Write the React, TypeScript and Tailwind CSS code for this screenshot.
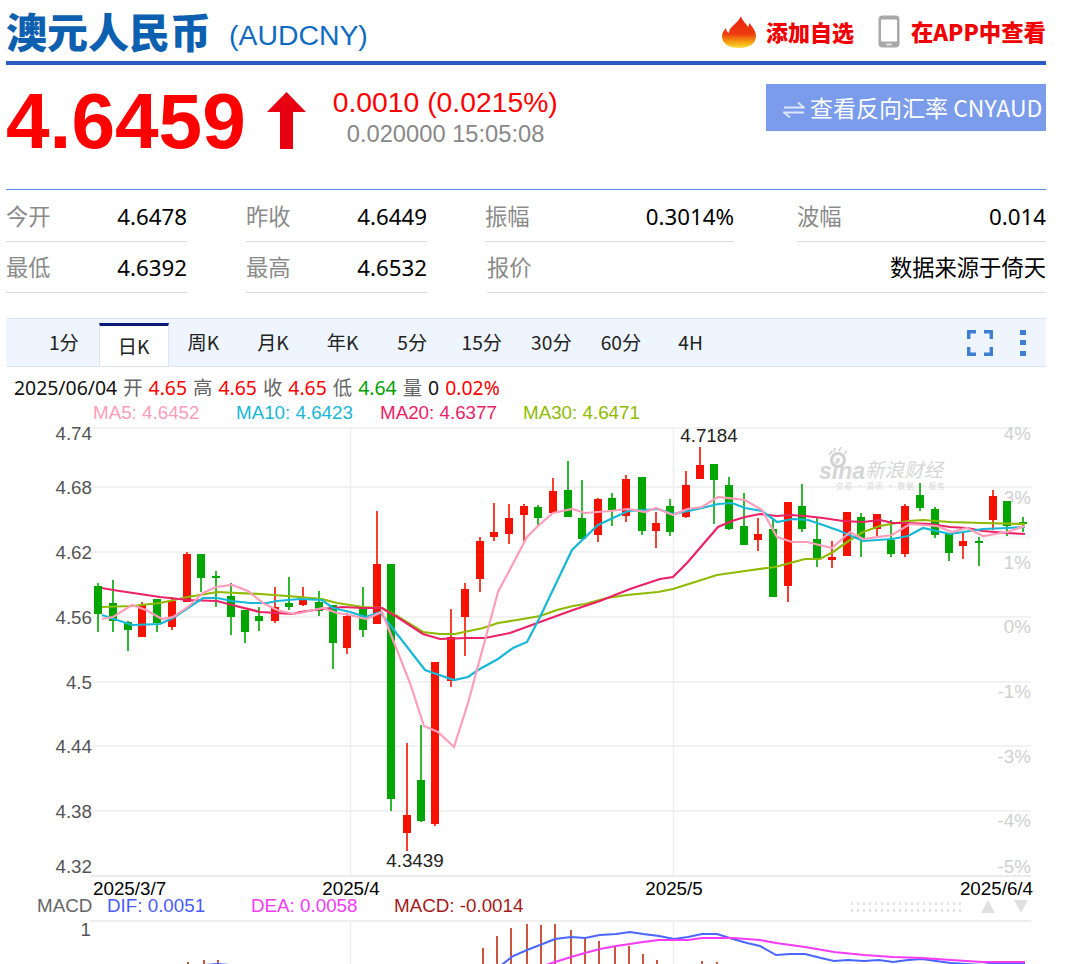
const GREEN = "#00a600"
const RED = "#f51200"

// x, body top, body bottom, wick top, wick bottom, colour
const candles: [number, number, number, number, number, string][] = [
  [98, 586, 614, 583, 632, GREEN], [113, 603, 621, 580, 632, GREEN], [128, 622, 630, 621, 651, GREEN],
  [142, 605, 637, 602, 637, RED], [157, 599, 623, 599, 632, GREEN], [172, 601, 627, 597, 630, RED],
  [187, 554, 602, 552, 602, RED], [201, 554, 578, 554, 592, GREEN], [216, 576, 578, 571, 607, GREEN],
  [231, 596, 617, 583, 635, GREEN], [245, 610, 632, 610, 643, GREEN], [259, 616, 621, 607, 631, GREEN],
  [275, 607, 621, 587, 623, RED], [289, 603, 607, 577, 610, GREEN], [303, 600, 605, 587, 606, RED],
  [319, 602, 611, 591, 616, GREEN], [333, 605, 643, 605, 669, GREEN], [347, 616, 648, 613, 654, RED],
  [363, 608, 630, 587, 637, GREEN], [377, 564, 624, 511, 624, RED], [391, 564, 799, 564, 811, GREEN],
  [407, 815, 833, 743, 851, RED], [421, 780, 821, 725, 822, GREEN], [435, 662, 824, 662, 826, RED],
  [451, 637, 681, 609, 687, RED], [465, 589, 617, 583, 656, RED], [480, 541, 579, 537, 592, RED],
  [494, 532, 537, 503, 541, RED], [509, 518, 534, 504, 544, RED], [524, 506, 515, 504, 541, RED],
  [538, 507, 518, 505, 525, GREEN], [553, 491, 513, 478, 513, RED], [568, 490, 517, 461, 517, GREEN],
  [582, 518, 539, 480, 539, GREEN], [598, 499, 535, 498, 542, RED], [612, 498, 510, 493, 526, GREEN],
  [626, 479, 516, 475, 522, RED], [642, 477, 531, 477, 535, GREEN], [656, 523, 531, 512, 548, RED],
  [670, 506, 532, 499, 536, GREEN], [686, 485, 517, 471, 518, RED], [700, 465, 479, 447, 479, RED],
  [714, 464, 480, 464, 524, GREEN], [729, 485, 529, 477, 530, GREEN], [744, 526, 545, 493, 545, GREEN],
  [758, 534, 540, 518, 551, RED], [773, 529, 597, 520, 597, GREEN], [788, 502, 586, 502, 602, RED],
  [802, 506, 529, 484, 532, GREEN], [817, 539, 559, 518, 567, GREEN], [832, 557, 560, 541, 568, RED],
  [847, 512, 556, 512, 556, RED], [861, 517, 538, 513, 557, GREEN], [877, 514, 529, 514, 536, RED],
  [891, 540, 554, 520, 557, GREEN], [905, 506, 554, 504, 557, RED], [920, 495, 508, 483, 511, GREEN],
  [935, 509, 535, 507, 538, GREEN], [949, 533, 553, 533, 561, GREEN], [963, 541, 546, 533, 559, RED],
  [979, 541, 543, 537, 566, GREEN], [993, 496, 520, 490, 530, RED], [1007, 501, 526, 501, 536, GREEN],
  [1023, 522, 524, 517, 532, GREEN],
]

const ma5 = "102,619 113,617 132,605 146,610 162,619 173,617 188,607 203,593 216,587 232,585 248,591 263,603 277,610 293,614 300,613 323,608 337,613 350,615 366,619 382,612 410,683 424,726 438,732 454,747 468,703 498,592 527,537 538,526 553,513 572,509 585,513 610,511 628,509 645,512 656,508 673,515 687,509 702,507 718,497 745,500 762,510 777,537 792,542 807,542 832,548 850,532 863,539 892,535 910,524 937,526 952,532 967,528 983,536 1007,532 1025,526"
const ma10 = "102,615 132,625 160,624 173,618 203,598 217,598 232,601 250,603 267,603 277,601 300,599 322,600 333,608 350,612 366,617 380,612 425,670 454,680 468,677 478,670 498,659 513,648 527,642 540,617 572,550 598,525 628,511 645,510 658,509 673,514 702,508 718,504 732,503 745,508 762,511 777,522 793,519 808,520 823,525 840,531 863,541 892,539 908,536 923,528 950,534 970,531 983,529 1007,528 1025,527"
const ma20 = "102,588 113,590 160,597 188,600 217,601 232,605 260,612 277,613 293,614 300,612 322,609 343,607 363,608 382,608 397,617 423,634 440,639 467,638 485,638 510,633 540,622 573,610 600,601 630,589 645,584 660,579 673,577 687,563 718,527 732,521 745,517 760,514 777,516 790,515 805,516 823,518 843,521 863,522 880,520 893,523 907,523 930,524 950,527 967,528 983,531 1007,533 1025,534"
const ma30 = "102,607 132,606 160,603 188,597 217,592 260,594 300,597 322,599 337,603 363,607 382,608 397,616 423,632 440,634 455,634 483,628 498,623 517,620 540,616 557,610 573,606 585,604 607,598 627,595 658,592 673,589 695,582 717,575 745,571 775,567 790,563 805,559 820,559 833,552 850,540 863,532 880,526 908,521 923,520 950,522 983,523 1025,524"

const dif = "186,966 204,965 218,964 240,966 499,967 513,956 527,950 540,945 555,939 571,937 585,938 600,935 616,934 630,932 643,934 659,936 674,939 688,937 702,934 717,934 733,939 747,943 760,946 776,955 790,954 805,954 821,958 834,961 848,960 864,961 879,960 893,962 908,960 922,959 936,961 951,963 967,964 982,965 996,963 1025,963"
const dea = "540,967 555,962 571,957 585,953 600,949 616,946 630,944 643,942 659,940 674,940 688,940 702,938 717,938 733,938 760,940 776,943 805,947 834,952 864,955 893,957 922,958 951,960 982,962 1025,962"
const macdBars: [number, number][] = [
  [188, 962], [204, 960], [218, 960], [232, 966], [380, 966], [467, 966], [483, 948], [497, 936], [511, 928],
  [527, 924], [541, 925], [555, 924], [571, 930], [585, 938], [599, 941], [615, 946], [629, 946], [643, 954],
  [657, 960], [673, 966], [688, 964], [702, 961], [717, 962],
]

const gridY = [487, 552, 617, 682, 746, 811]
const priceLabels: [string, number][] = [["4.74", 433], ["4.68", 487], ["4.62", 552], ["4.56", 617], ["4.5", 682], ["4.44", 746], ["4.38", 811], ["4.32", 866]]
const pctLabels: [string, number][] = [["4%", 433], ["3%", 497], ["1%", 562], ["0%", 626], ["-1%", 691], ["-3%", 756], ["-4%", 820], ["-5%", 866]]
const tabs = ["1分", "日K", "周K", "月K", "年K", "5分", "15分", "30分", "60分", "4H"]

function Stat({ label, value, width, height }: { label: string; value: string; width: string; height: string }) {
  return (
    <div className={`flex items-center justify-between border-b border-[#dcdcdc] ${height} ${width}`}>
      <span className="text-[#8a8a8a]">{label}</span>
      <span className="text-black">{value}</span>
    </div>
  )
}

function Flame() {
  return (
    <svg width="36" height="34" viewBox="0 0 36 34">
      <defs>
        <linearGradient id="flame" x1="0" y1="0" x2="0" y2="1">
          <stop offset="0" stopColor="#e8200f" />
          <stop offset="0.55" stopColor="#ee3a10" />
          <stop offset="0.8" stopColor="#f59a10" />
          <stop offset="1" stopColor="#f8e23a" />
        </linearGradient>
      </defs>
      <path d="M20 1c1 5 5 7 7 11 1-1 1-3 1-4 4 4 7 9 7 13 0 8-7 12-17 12S1 29 1 21c0-3 2-6 4-8 0 2 1 4 3 5 0-7 9-9 12-17z" fill="url(#flame)" />
    </svg>
  )
}

function Phone() {
  return (
    <svg width="22" height="33" viewBox="0 0 22 33">
      <rect x="0.5" y="0.5" width="21" height="32" rx="4" fill="#a8a8a8" />
      <rect x="3" y="4.5" width="16" height="22" rx="1" fill="#fff" />
      <rect x="8" y="28.5" width="6" height="2" rx="1" fill="#e4e4e4" />
    </svg>
  )
}

function KChart() {
  return (
    <svg className="block overflow-visible" width="1080" height="473" viewBox="0 424 1080 473" fontSize="18.8">
      <line x1="90" x2="1031" y1="428" y2="428" stroke="#eeeeee" strokeWidth="1.5" />
      {gridY.map(y => <line key={y} x1="90" x2="1031" y1={y} y2={y} stroke="#eeeeee" strokeWidth="1.5" />)}
      <line x1="90" x2="1031" y1="876" y2="876" stroke="#e4e4e4" strokeWidth="1.5" />
      <line x1="930" x2="1031" y1="537" y2="537" stroke="#eeeeee" strokeWidth="1" />
      <line x1="350.5" x2="350.5" y1="428" y2="876" stroke="#eeeeee" strokeWidth="1.5" />
      <line x1="673.5" x2="673.5" y1="428" y2="876" stroke="#eeeeee" strokeWidth="1.5" />

      {/* watermark */}
      <g fill="#d6d6d6">
        <circle cx="838" cy="460" r="6.5" fill="none" stroke="#d2d2d2" strokeWidth="3" />
        <circle cx="838" cy="460" r="2" />
        <path d="M829 455l3-4M834 452l1-4M839 451l2-4M844 454l3-3" stroke="#d2d2d2" strokeWidth="1.6" />
        <text x="819" y="479" fontSize="23" fontWeight="700" fontStyle="italic">sina</text>
        <text x="865" y="477" fontSize="19.500" fontStyle="italic" fontFamily="'Noto Sans CJK SC', sans-serif">新浪财经</text>
        <text x="836" y="489" fontSize="7.500" fontFamily="'Noto Sans CJK SC', sans-serif" letterSpacing="1">交易 · 资讯 · 数据 · 服务</text>
      </g>

      {priceLabels.map(([t, y]) => <text key={t} x="92" y={y + 6.500} textAnchor="end" fill="#555555">{t}</text>)}
      {pctLabels.map(([t, y]) => <text key={t} x="1031" y={y + 6.500} textAnchor="end" fill="#cfcfcf">{t}</text>)}

      {candles.map(([x, top, bottom, wickTop, wickBottom, color]) => (
        <g key={x} fill={color}>
          <rect x={x - 0.8} y={wickTop} width="1.6" height={wickBottom - wickTop} />
          <rect x={x - 4} y={top} width="8" height={bottom - top} />
        </g>
      ))}

      <polyline points={ma30} fill="none" stroke="#8fba00" strokeWidth="2.2" />
      <polyline points={ma20} fill="none" stroke="#ec2267" strokeWidth="2.2" />
      <polyline points={ma10} fill="none" stroke="#17b7d8" strokeWidth="2.2" />
      <polyline points={ma5} fill="none" stroke="#ff9dbb" strokeWidth="2.2" />

      <text x="709" y="442" textAnchor="middle" fill="#222222">4.7184</text>
      <text x="415" y="867" textAnchor="middle" fill="#222222">4.3439</text>

      <text x="93" y="895" fill="#000000">2025/3/7</text>
      <text x="351" y="895" textAnchor="middle" fill="#000000">2025/4</text>
      <text x="674" y="895" textAnchor="middle" fill="#000000">2025/5</text>
      <text x="1033" y="895" textAnchor="end" fill="#000000">2025/6/4</text>
    </svg>
  )
}

function MacdChart() {
  return (
    <svg className="block" width="1080" height="48" viewBox="0 916 1080 48" fontSize="18.8">
      <line x1="90" x2="1031" y1="921" y2="921" stroke="#e8e8e8" strokeWidth="1.5" />
      <line x1="350.5" x2="350.5" y1="921" y2="964" stroke="#eeeeee" strokeWidth="1.5" />
      <line x1="673.5" x2="673.5" y1="921" y2="964" stroke="#eeeeee" strokeWidth="1.5" />
      <text x="91" y="936" textAnchor="end" fill="#555555">1</text>
      {macdBars.map(([x, y]) => <rect key={x} x={x - 0.8} y={y} width="1.6" height={968 - y} fill="#bd2c10" />)}
      <polyline points={dif} fill="none" stroke="#4a66ff" strokeWidth="2" />
      <polyline points={dea} fill="none" stroke="#f53bf5" strokeWidth="2" />
    </svg>
  )
}

export default function App() {
  return (
    <div className="w-[1080px] h-[964px] overflow-hidden bg-white pl-[6px] font-['Liberation_Sans','Noto_Sans_CJK_SC',sans-serif]">
      <div className="w-[1040px]">
        {/* title */}
        <div className="flex items-center h-[61px]">
          <span className="text-[41px] font-black text-[#0d5fb0] font-['Noto_Sans_CJK_SC',sans-serif] leading-none">澳元人民币</span>
          <span className="ml-[18px] mt-[10px] text-[28.4px] text-[#0f6cc0]">(AUDCNY)</span>
          <div className="ml-auto mt-[2px] flex items-center text-[22px] font-black text-[#f00000] font-['Noto_Sans_CJK_SC',sans-serif]">
            <Flame />
            <span className="ml-[9px]">添加自选</span>
            <span className="ml-[24px]"><Phone /></span>
            <span className="ml-[11px] text-[22.4px]">在APP中查看</span>
          </div>
        </div>
        <div className="h-[4px] bg-[#2c5cc2]" />

        {/* price */}
        <div className="flex h-[124px]">
          <span className="mt-[12px] text-[78.4px] leading-[88px] font-bold text-[#ff0000]">4.6459</span>
          <svg className="ml-[21px] mt-[27px]" width="39" height="57" viewBox="0 0 39 57">
            <path d="M19.500 0L39 20H26V57H13V20H0z" fill="#e60012" />
          </svg>
          <div className="ml-[27px] mt-[20px]">
            <div className="text-[28.3px] leading-[34px] text-[#ff0000]">0.0010 (0.0215%)</div>
            <div className="ml-[14px] mt-[1px] text-[23.7px] leading-[28px] text-[#888888]">0.020000 15:05:08</div>
          </div>
          <div className="ml-auto mt-[19px] flex items-center w-[280px] h-[47px] bg-[#7a9ceb] text-white text-[23px] font-['Noto_Sans_CJK_SC',sans-serif] whitespace-nowrap pl-[17px]">
            <svg width="22" height="20" viewBox="0 0 22 20" fill="none" stroke="#dfe8fb" strokeWidth="1.8" className="mt-[5px] shrink-0">
              <path d="M1 7.500h20L15 2.500M21 12.500H1l6 5" />
            </svg>
            <span className="ml-[5px]">查看反向汇率 CNYAUD</span>
          </div>
        </div>

        {/* stats */}
        <div className="h-px bg-[#4f8de0]" />
        <div className="text-[22.3px] font-['Noto_Sans','Noto_Sans_CJK_SC',sans-serif]">
          <div className="flex">
            <Stat label="今开" value="4.6478" width="w-[181px]" height="h-[52px] pt-[2px]" />
            <div className="ml-[59px]"><Stat label="昨收" value="4.6449" width="w-[181px]" height="h-[52px] pt-[2px]" /></div>
            <div className="ml-[58px]"><Stat label="振幅" value="0.3014%" width="w-[249px]" height="h-[52px] pt-[2px]" /></div>
            <div className="ml-[63px]"><Stat label="波幅" value="0.014" width="w-[249px]" height="h-[52px] pt-[2px]" /></div>
          </div>
          <div className="flex">
            <Stat label="最低" value="4.6392" width="w-[181px]" height="h-[51px] pt-[2px]" />
            <div className="ml-[59px]"><Stat label="最高" value="4.6532" width="w-[181px]" height="h-[51px] pt-[2px]" /></div>
            <div className="ml-[60px]"><Stat label="报价" value="数据来源于倚天" width="w-[559px]" height="h-[51px] pt-[2px]" /></div>
          </div>
        </div>

        {/* period tabs */}
        <div className="mt-[25px] flex h-[49px] border-y border-[#dde5f2] bg-[#eef5ff] pl-[23px] text-[19.2px] text-[#222222] font-['Noto_Sans_CJK_SC',sans-serif]">
          {tabs.map(tab => tab === "日K"
            ? <div key={tab} className="mt-[4px] flex w-[70px] items-center justify-center border-x border-t-[3px] border-x-[#dbe4f2] border-t-[#0a1a78] bg-white">{tab}</div>
            : <div key={tab} className="flex w-[69.6px] items-center justify-center">{tab}</div>)}
          <div className="ml-auto flex items-center pr-[20px]">
            <svg width="26" height="26" viewBox="0 0 26 26" fill="none" stroke="#3d7fd0" strokeWidth="3.4">
              <path d="M1.700 9V1.700H9M17 1.700h7.300V9M1.700 17v7.300H9M17 24.300h7.300V17" />
            </svg>
            <div className="ml-[27px] flex flex-col gap-[5.500px]">
              <div className="h-[5px] w-[6px] bg-[#3d7fd0]" />
              <div className="h-[5px] w-[6px] bg-[#3d7fd0]" />
              <div className="h-[5px] w-[6px] bg-[#3d7fd0]" />
            </div>
          </div>
        </div>

        {/* quote line */}
        <div className="flex h-[35px] items-center gap-[6px] pl-[8px] pt-[7px] text-[19.4px] text-[#666666] whitespace-nowrap font-['Noto_Sans','Noto_Sans_CJK_SC',sans-serif]">
          <span className="text-[#111111]">2025/06/04</span>
          <span>开</span><span className="text-[#ff0000]">4.65</span>
          <span>高</span><span className="text-[#ff0000]">4.65</span>
          <span>收</span><span className="text-[#ff0000]">4.65</span>
          <span>低</span><span className="text-[#00a000]">4.64</span>
          <span>量</span><span className="text-[#111111]">0</span>
          <span className="text-[#ff0000]">0.02%</span>
        </div>
      </div>

      {/* moving averages */}
      <div className="flex h-[22px] items-center pl-[87px] text-[18.8px] whitespace-nowrap">
        <span className="w-[143px] text-[#ff9dbb]">MA5: 4.6452</span>
        <span className="w-[144px] text-[#17b7d8]">MA10: 4.6423</span>
        <span className="w-[143px] text-[#ec2267]">MA20: 4.6377</span>
        <span className="text-[#8fba00]">MA30: 4.6471</span>
      </div>

      <div className="-ml-[6px]"><KChart /></div>

      {/* macd legend */}
      <div className="flex h-[19px] items-center text-[18.8px] leading-none whitespace-nowrap">
        <span className="ml-[31px] w-[70px] text-[#666666]">MACD</span>
        <span className="w-[144px] text-[#4a5cff]">DIF: 0.0051</span>
        <span className="w-[143px] text-[#f53bf5]">DEA: 0.0058</span>
        <span className="text-[#a51a1a]">MACD: -0.0014</span>
        <div className="ml-[326px] flex flex-col gap-[4px]">
          <div className="h-[3px] w-[115px] bg-[radial-gradient(circle,#e2e2e2_1.2px,transparent_1.3px)] bg-[length:6px_3px]" />
          <div className="h-[3px] w-[115px] bg-[radial-gradient(circle,#e2e2e2_1.2px,transparent_1.3px)] bg-[length:6px_3px]" />
        </div>
        <svg className="ml-[17px]" width="14" height="13" viewBox="0 0 14 13"><path d="M7 0l7 13H0z" fill="#e0e0e0" /></svg>
        <svg className="ml-[19px]" width="14" height="13" viewBox="0 0 14 13"><path d="M0 0h14L7 13z" fill="#e0e0e0" /></svg>
      </div>

      <div className="-ml-[6px]"><MacdChart /></div>
    </div>
  )
}
